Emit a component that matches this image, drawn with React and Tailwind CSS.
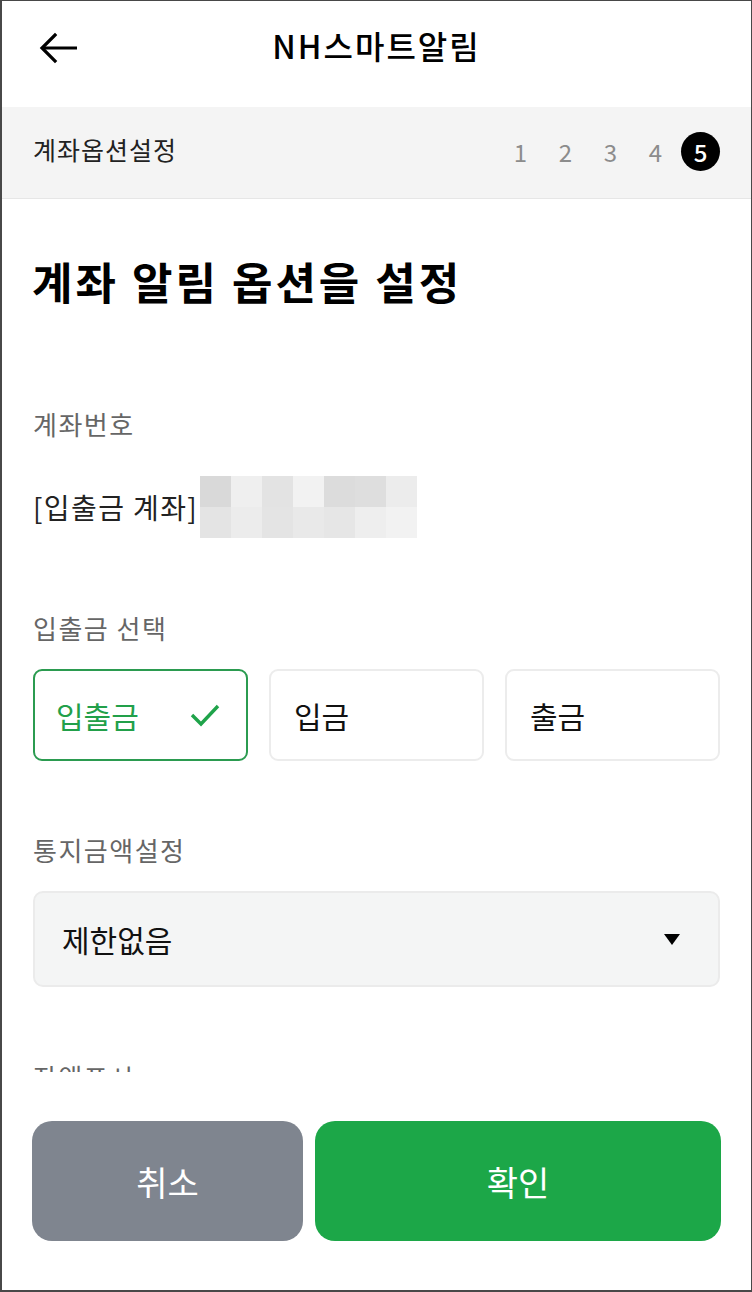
import React from "react";

const F = { fontFamily: '"Noto Sans CJK KR", "Noto Sans", sans-serif' };

const blurRows = [
  ["#d9d9d9", "#efefef", "#e3e3e3", "#f2f2f2", "#dcdcdc", "#dedede", "#ececec"],
  ["#e4e4e4", "#ececec", "#e4e4e4", "#e9e9e9", "#e6e6e6", "#eeeeee", "#f2f2f2"],
];

export default function App() {
  return (
    <div
      style={F}
      className="w-[752px] h-[1292px] bg-white border-t border-r border-l-2 border-b-2 border-[#484848] flex flex-col overflow-hidden"
    >
      {/* Header */}
      <div className="h-[106px] shrink-0 relative flex items-center justify-center">
        <div className="absolute left-[34px] top-[30px]">
          <svg width="44" height="34" viewBox="0 0 44 34" fill="none">
            <path d="M41 17H6" stroke="#000" strokeWidth="3.2" />
            <path d="M19 4L6 17L19 30" stroke="#000" strokeWidth="3.2" strokeLinecap="square" />
          </svg>
        </div>
        <div className="text-[32px] font-medium text-black tracking-[2px] -mt-[18px]">NH스마트알림</div>
      </div>

      {/* Step band */}
      <div className="h-[92px] shrink-0 bg-[#f4f4f4] border-b border-[#e6e6e6] flex items-center justify-between pl-[31px] pr-[31px]">
        <div className="text-[25px] text-[#222] tracking-[1px] -mt-[6px]">계좌옵션설정</div>
        <div className="flex items-center -mt-[2px]">
          <span className="w-[45px] text-center text-[24px] text-[#8c8c8c]">1</span>
          <span className="w-[45px] text-center text-[24px] text-[#8c8c8c]">2</span>
          <span className="w-[45px] text-center text-[24px] text-[#8c8c8c]">3</span>
          <span className="w-[45px] text-center text-[24px] text-[#8c8c8c]">4</span>
          <span className="ml-[3px] w-[39px] h-[39px] rounded-full bg-black text-white text-[24px] font-medium flex items-center justify-center">5</span>
        </div>
      </div>

      {/* Content */}
      <div className="h-[873px] shrink-0 overflow-hidden px-[31px]">
        <div className="pt-[52px] text-[44px] font-bold text-black leading-[60px] tracking-[3px] -ml-[1px]">계좌 알림 옵션을 설정</div>

        <div className="mt-[95px] text-[26px] text-[#666] leading-[36px] tracking-[1.5px]">계좌번호</div>
        <div className="mt-[34px] flex items-center h-[62px]">
          <span className="text-[28px] text-[#222] tracking-[1.4px]">[입출금 계좌]</span>
          <div className="ml-[2px] flex flex-col">
            {blurRows.map((row, i) => (
              <div key={i} className="flex">
                {row.map((c, j) => (
                  <div key={j} className="w-[31px] h-[31px]" style={{ backgroundColor: c }} />
                ))}
              </div>
            ))}
          </div>
        </div>

        <div className="mt-[72px] text-[26px] text-[#666] leading-[36px] tracking-[1.5px]">입출금 선택</div>
        <div className="mt-[23px] grid grid-cols-3 gap-[21px]">
          <div className="h-[92px] rounded-[9px] border-2 border-[#2b9b50] flex items-center justify-between pl-[21px] pr-[25px]">
            <span className="text-[30px] text-[#22a04a]">입출금</span>
            <svg width="32" height="28" viewBox="0 0 32 28" fill="none">
              <path d="M3 14L12 23L29 5" stroke="#1fa34a" strokeWidth="3.4" />
            </svg>
          </div>
          <div className="h-[92px] rounded-[9px] border-2 border-[#ececec] flex items-center pl-[23px]">
            <span className="text-[30px] text-[#111]">입금</span>
          </div>
          <div className="h-[92px] rounded-[9px] border-2 border-[#ececec] flex items-center pl-[23px]">
            <span className="text-[30px] text-[#111]">출금</span>
          </div>
        </div>

        <div className="mt-[71px] text-[26px] text-[#666] leading-[36px] tracking-[1.5px]">통지금액설정</div>
        <div className="mt-[23px] h-[96px] rounded-[10px] bg-[#f4f5f5] border-2 border-[#ebebeb] flex items-center justify-between pl-[27px] pr-[37px]">
          <span className="text-[30px] text-[#111]">제한없음</span>
          <svg width="18" height="13" viewBox="0 0 18 13">
            <path d="M1 1H17L9 12Z" fill="#000" />
          </svg>
        </div>

        <div className="mt-[72px] text-[26px] text-[#666] leading-[36px] tracking-[1.5px]">잔액표시</div>
      </div>

      {/* Footer */}
      <div className="flex-1 px-[30px] pt-[49px] flex gap-[12px]">
        <button className="w-[271px] h-[120px] rounded-[20px] bg-[#7f858f] text-white text-[34px] flex items-center justify-center">취소</button>
        <button className="flex-1 h-[120px] rounded-[20px] bg-[#1ca748] text-white text-[34px] flex items-center justify-center">확인</button>
      </div>
    </div>
  );
}
